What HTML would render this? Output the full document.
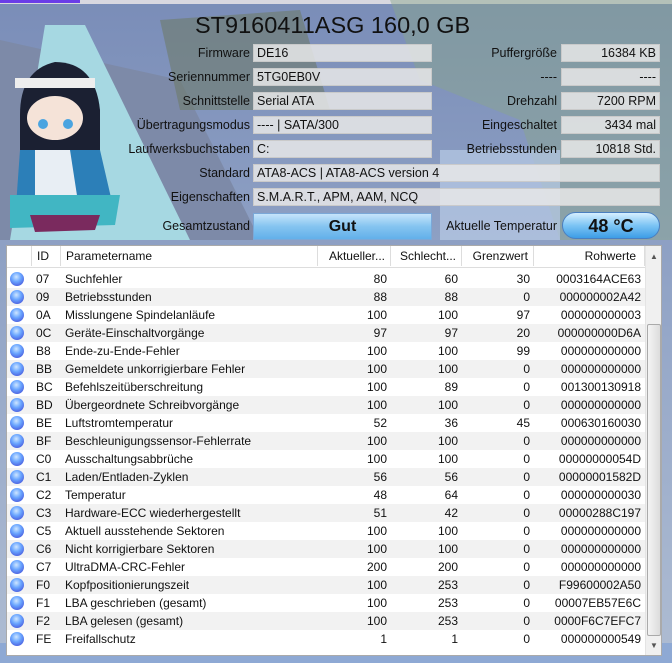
<!DOCTYPE html>
<html><head><meta charset="utf-8"><style>
*{margin:0;padding:0;box-sizing:border-box}
body{width:672px;height:663px;overflow:hidden;position:relative;font-family:"Liberation Sans",sans-serif;font-size:12px;color:#111;background:#8fa3bf}
.abs{position:absolute}
.lbl{position:absolute;text-align:right;white-space:nowrap;font-size:12.5px}
.box{position:absolute;height:18px;background:rgba(232,232,232,0.85);border:1px solid rgba(200,200,200,.9);padding:1px 3px;font-size:12.5px;white-space:nowrap}
.r{text-align:right}
table{border-collapse:collapse;table-layout:fixed}
td{height:18px;padding:0 4px;white-space:nowrap;overflow:hidden;font-size:12px}
tr:nth-child(even) td{background:#f2f2f2}
.dot{display:inline-block;width:14px;height:14px;border-radius:50%;background:radial-gradient(circle at 45% 35%,#cfe6ff 0,#6aa6ff 40%,#4b5fe0 80%,#3e44c0 100%);vertical-align:middle;margin-left:-1px}
.hd{position:absolute;top:0;height:20px;font-size:12px;line-height:20px;border-right:1px solid #ddd;padding:0 5px;white-space:nowrap}
</style></head><body>
<svg class="abs" style="left:0;top:0" width="672" height="663">
<defs>
<linearGradient id="sky" x1="0" y1="0" x2="0" y2="1"><stop offset="0" stop-color="#7a8db8"/><stop offset=".5" stop-color="#95a7c8"/><stop offset="1" stop-color="#aebcd2"/></linearGradient>
</defs>
<rect width="672" height="663" fill="url(#sky)"/>
<rect x="0" y="0" width="672" height="4" fill="#d8d8e0"/>
<rect x="0" y="0" width="80" height="3" fill="#6a3ce8"/>
<polygon points="0,40 180,80 260,240 0,240" fill="#7d8aa8"/>
<polygon points="160,20 300,10 330,110 180,110" fill="#6e7c6a" opacity=".6"/>
<polygon points="390,0 672,0 672,240 560,240 520,120 420,80" fill="#8aa68a" opacity=".45"/>
<rect x="440" y="150" width="120" height="90" fill="#b8cbe6" opacity=".7"/>
<polygon points="45,25 85,25 190,240 10,240" fill="#a6d8e2"/>
<path d="M20,115 Q20,70 55,62 Q95,62 100,110 L100,190 L80,200 L20,200Z" fill="#1b2032"/>
<ellipse cx="55" cy="118" rx="28" ry="22" fill="#f5e3d8"/>
<rect x="15" y="78" width="80" height="10" fill="#eee"/>
<circle cx="43" cy="124" r="5" fill="#4aa4e0"/><circle cx="68" cy="124" r="5" fill="#4aa4e0"/>
<polygon points="20,150 100,150 115,215 15,220" fill="#2c7fb8"/>
<polygon points="35,150 70,150 80,215 35,220" fill="#e8eef4"/>
<polygon points="10,195 120,195 115,225 10,228" fill="#41b6c3"/>
<polygon points="30,215 100,215 95,230 35,232" fill="#7a2a5e"/>
<rect x="0" y="643" width="672" height="20" fill="#8ea9d4"/>
</svg>
<div class="abs" style="left:195px;top:12px;font-size:23.5px;color:#111">ST9160411ASG 160,0 GB</div>

<div class="lbl" style="right:422px;top:46px">Firmware</div><div class="box" style="left:253px;top:44px;width:179px">DE16</div>
<div class="lbl" style="right:422px;top:70px">Seriennummer</div><div class="box" style="left:253px;top:68px;width:179px">5TG0EB0V</div>
<div class="lbl" style="right:422px;top:94px">Schnittstelle</div><div class="box" style="left:253px;top:92px;width:179px">Serial ATA</div>
<div class="lbl" style="right:422px;top:118px">Übertragungsmodus</div><div class="box" style="left:253px;top:116px;width:179px">---- | SATA/300</div>
<div class="lbl" style="right:422px;top:142px">Laufwerksbuchstaben</div><div class="box" style="left:253px;top:140px;width:179px">C:</div>
<div class="lbl" style="right:422px;top:166px">Standard</div><div class="box" style="left:253px;top:164px;width:407px">ATA8-ACS | ATA8-ACS version 4</div>
<div class="lbl" style="right:422px;top:190px">Eigenschaften</div><div class="box" style="left:253px;top:188px;width:407px">S.M.A.R.T., APM, AAM, NCQ</div>
<div class="lbl" style="right:422px;top:219px">Gesamtzustand</div>
<div class="abs" style="left:253px;top:213px;width:179px;height:27px;background:linear-gradient(#c6e4fb,#85c4f0 50%,#62b0ea);border:1px solid #7aa8d8;text-align:center;font-weight:bold;font-size:16px;line-height:26px">Gut</div>

<div class="lbl" style="right:115px;top:46px">Puffergröße</div><div class="box r" style="left:561px;top:44px;width:99px">16384 KB</div>
<div class="lbl" style="right:115px;top:70px">----</div><div class="box r" style="left:561px;top:68px;width:99px">----</div>
<div class="lbl" style="right:115px;top:94px">Drehzahl</div><div class="box r" style="left:561px;top:92px;width:99px">7200 RPM</div>
<div class="lbl" style="right:115px;top:118px">Eingeschaltet</div><div class="box r" style="left:561px;top:116px;width:99px">3434 mal</div>
<div class="lbl" style="right:115px;top:142px">Betriebsstunden</div><div class="box r" style="left:561px;top:140px;width:99px">10818 Std.</div>
<div class="lbl" style="right:115px;top:219px">Aktuelle Temperatur</div>
<div class="abs" style="left:562px;top:212px;width:98px;height:27px;border-radius:14px;background:linear-gradient(#d6efff,#7cc4f4 50%,#3d9de6);border:1px solid #4a7fc0;text-align:center;font-weight:bold;font-size:18px;line-height:26px">48 °C</div>

<div class="abs" style="left:6px;top:245px;width:656px;height:411px;background:#fff;border:1px solid #aaa;overflow:hidden">
 <div class="abs" style="left:0;top:0;width:638px;height:22px;background:#fff;border-bottom:1px solid #ddd">
  <div class="hd" style="left:0;width:25px"></div>
  <div class="hd" style="left:25px;width:29px">ID</div>
  <div class="hd" style="left:54px;width:257px">Parametername</div>
  <div class="hd" style="left:311px;width:73px;text-align:right">Aktueller...</div>
  <div class="hd" style="left:384px;width:71px;text-align:right">Schlecht...</div>
  <div class="hd" style="left:455px;width:72px;text-align:right">Grenzwert</div>
  <div class="hd" style="left:527px;width:111px;text-align:right;padding-right:8px">Rohwerte</div>
 </div>
 <table class="abs" style="left:0;top:24px;width:638px">
 <colgroup><col style="width:25px"><col style="width:29px"><col style="width:257px"><col style="width:73px"><col style="width:71px"><col style="width:72px"><col style="width:111px"></colgroup>
 <tbody>
<tr><td><span class="dot"></span></td><td>07</td><td>Suchfehler</td><td class="r">80</td><td class="r">60</td><td class="r">30</td><td class="r">0003164ACE63</td></tr>
<tr><td><span class="dot"></span></td><td>09</td><td>Betriebsstunden</td><td class="r">88</td><td class="r">88</td><td class="r">0</td><td class="r">000000002A42</td></tr>
<tr><td><span class="dot"></span></td><td>0A</td><td>Misslungene Spindelanläufe</td><td class="r">100</td><td class="r">100</td><td class="r">97</td><td class="r">000000000003</td></tr>
<tr><td><span class="dot"></span></td><td>0C</td><td>Geräte-Einschaltvorgänge</td><td class="r">97</td><td class="r">97</td><td class="r">20</td><td class="r">000000000D6A</td></tr>
<tr><td><span class="dot"></span></td><td>B8</td><td>Ende-zu-Ende-Fehler</td><td class="r">100</td><td class="r">100</td><td class="r">99</td><td class="r">000000000000</td></tr>
<tr><td><span class="dot"></span></td><td>BB</td><td>Gemeldete unkorrigierbare Fehler</td><td class="r">100</td><td class="r">100</td><td class="r">0</td><td class="r">000000000000</td></tr>
<tr><td><span class="dot"></span></td><td>BC</td><td>Befehlszeitüberschreitung</td><td class="r">100</td><td class="r">89</td><td class="r">0</td><td class="r">001300130918</td></tr>
<tr><td><span class="dot"></span></td><td>BD</td><td>Übergeordnete Schreibvorgänge</td><td class="r">100</td><td class="r">100</td><td class="r">0</td><td class="r">000000000000</td></tr>
<tr><td><span class="dot"></span></td><td>BE</td><td>Luftstromtemperatur</td><td class="r">52</td><td class="r">36</td><td class="r">45</td><td class="r">000630160030</td></tr>
<tr><td><span class="dot"></span></td><td>BF</td><td>Beschleunigungssensor-Fehlerrate</td><td class="r">100</td><td class="r">100</td><td class="r">0</td><td class="r">000000000000</td></tr>
<tr><td><span class="dot"></span></td><td>C0</td><td>Ausschaltungsabbrüche</td><td class="r">100</td><td class="r">100</td><td class="r">0</td><td class="r">00000000054D</td></tr>
<tr><td><span class="dot"></span></td><td>C1</td><td>Laden/Entladen-Zyklen</td><td class="r">56</td><td class="r">56</td><td class="r">0</td><td class="r">00000001582D</td></tr>
<tr><td><span class="dot"></span></td><td>C2</td><td>Temperatur</td><td class="r">48</td><td class="r">64</td><td class="r">0</td><td class="r">000000000030</td></tr>
<tr><td><span class="dot"></span></td><td>C3</td><td>Hardware-ECC wiederhergestellt</td><td class="r">51</td><td class="r">42</td><td class="r">0</td><td class="r">00000288C197</td></tr>
<tr><td><span class="dot"></span></td><td>C5</td><td>Aktuell ausstehende Sektoren</td><td class="r">100</td><td class="r">100</td><td class="r">0</td><td class="r">000000000000</td></tr>
<tr><td><span class="dot"></span></td><td>C6</td><td>Nicht korrigierbare Sektoren</td><td class="r">100</td><td class="r">100</td><td class="r">0</td><td class="r">000000000000</td></tr>
<tr><td><span class="dot"></span></td><td>C7</td><td>UltraDMA-CRC-Fehler</td><td class="r">200</td><td class="r">200</td><td class="r">0</td><td class="r">000000000000</td></tr>
<tr><td><span class="dot"></span></td><td>F0</td><td>Kopfpositionierungszeit</td><td class="r">100</td><td class="r">253</td><td class="r">0</td><td class="r">F99600002A50</td></tr>
<tr><td><span class="dot"></span></td><td>F1</td><td>LBA geschrieben (gesamt)</td><td class="r">100</td><td class="r">253</td><td class="r">0</td><td class="r">00007EB57E6C</td></tr>
<tr><td><span class="dot"></span></td><td>F2</td><td>LBA gelesen (gesamt)</td><td class="r">100</td><td class="r">253</td><td class="r">0</td><td class="r">0000F6C7EFC7</td></tr>
<tr><td><span class="dot"></span></td><td>FE</td><td>Freifallschutz</td><td class="r">1</td><td class="r">1</td><td class="r">0</td><td class="r">000000000549</td></tr>
 </tbody></table>
 <div class="abs" style="left:638px;top:0;width:17px;height:409px;background:#f0f0f0;border-left:1px solid #e4e4e4">
  <div class="abs" style="left:4px;top:6px;font-size:8px;color:#555">▲</div>
  <div class="abs" style="left:1px;top:78px;width:14px;height:312px;background:linear-gradient(90deg,#f4f4f4,#dcdcdc);border:1px solid #aaa;border-radius:2px"></div>
  <div class="abs" style="left:4px;top:395px;font-size:8px;color:#555">▼</div>
 </div>
</div>
</body></html>
